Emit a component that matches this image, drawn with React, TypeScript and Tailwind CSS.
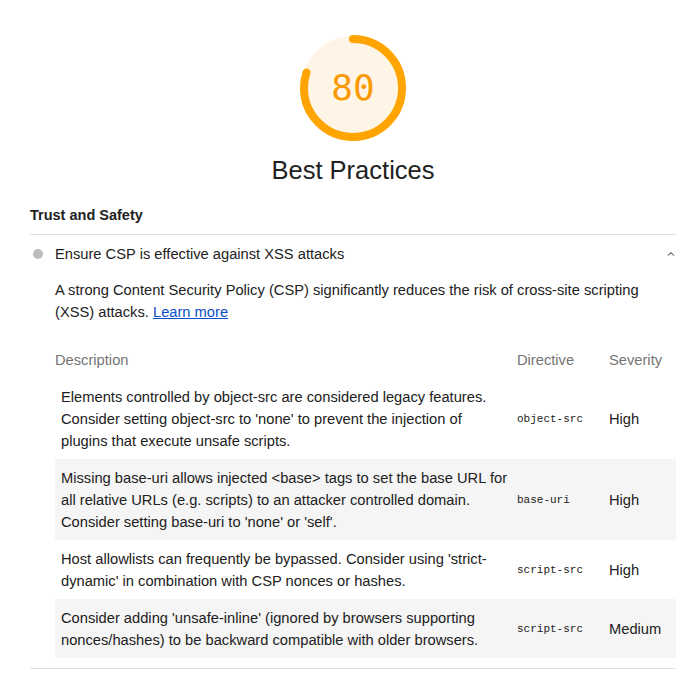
const ROWS = [
  {
    text: "Elements controlled by object-src are considered legacy features. Consider setting object-src to 'none' to prevent the injection of plugins that execute unsafe scripts.",
    directive: "object-src",
    severity: "High",
  },
  {
    text: "Missing base-uri allows injected <base> tags to set the base URL for all relative URLs (e.g. scripts) to an attacker controlled domain. Consider setting base-uri to 'none' or 'self'.",
    directive: "base-uri",
    severity: "High",
  },
  {
    text: "Host allowlists can frequently be bypassed. Consider using 'strict-dynamic' in combination with CSP nonces or hashes.",
    directive: "script-src",
    severity: "High",
  },
  {
    text: "Consider adding 'unsafe-inline' (ignored by browsers supporting nonces/hashes) to be backward compatible with older browsers.",
    directive: "script-src",
    severity: "Medium",
  },
];

function Gauge({ score }: { score: number }) {
  const r = 49;
  const c = 2 * Math.PI * r;
  return (
    <div className="relative h-[106px] w-[106px]">
      <svg viewBox="0 0 106 106" className="h-[106px] w-[106px] -rotate-90">
        <circle cx="53" cy="53" r="52" fill="#fff5e6" />
        <circle
          cx="53"
          cy="53"
          r={r}
          fill="none"
          stroke="#ffa400"
          strokeWidth="8"
          strokeLinecap="round"
          strokeDasharray={`${(c * score) / 100} ${c}`}
        />
      </svg>
      <div className="absolute inset-0 flex items-center justify-center font-['DejaVu_Sans_Mono',monospace] text-[36px] text-[#fa9a00]">
        {score}
      </div>
    </div>
  );
}

export default function App() {
  return (
    <main className="min-h-screen bg-white pl-[30px] pr-[24px] pt-[35px] font-['Liberation_Sans',Arial,sans-serif] text-[14.7px] text-[#212121]">
      {/* Category header: score gauge + title */}
      <div className="flex flex-col items-center">
        <Gauge score={80} />
        <h1 className="mt-[14px] text-[25.5px] leading-[30px]">Best Practices</h1>
      </div>

      <h2 className="mt-[19px] pb-[8px] text-[14.5px] font-bold leading-[22px]">
        Trust and Safety
      </h2>

      <section className="border-y border-[#e0e0e0]">
        <div className="flex items-center pt-[8px] leading-[22px]">
          <span className="ml-[3px] h-[10px] w-[10px] rounded-full bg-[#bdbdbd]" />
          <span className="ml-[12px] flex-1">
            Ensure CSP is effective against XSS attacks
          </span>
          <svg viewBox="0 0 10 6" className="mr-[1px] h-[6px] w-[8px]">
            <polyline
              points="1,5 5,1.5 9,5"
              fill="none"
              stroke="#757575"
              strokeWidth="1.4"
            />
          </svg>
        </div>

        <div className="pl-[25px] pb-[10px]">
          <p className="mt-[14px] pr-[12px] leading-[22px]">
            A strong Content Security Policy (CSP) significantly reduces the risk of cross-site scripting
            (XSS) attacks.{" "}
            <a href="#" className="text-[#0c50c7] underline">
              Learn more
            </a>
          </p>

          <div className="mt-[18px] grid grid-cols-[1fr_92px_67px] leading-[22px]">
            <div className="pt-[8px] pb-[7px] text-[#757575]">Description</div>
            <div className="pt-[8px] pb-[7px] text-[#757575]">Directive</div>
            <div className="pt-[8px] pb-[7px] text-[#757575]">Severity</div>

            {ROWS.map((row, i) => (
              <div
                key={i}
                className={`col-span-3 grid grid-cols-[1fr_92px_67px] items-center ${
                  i % 2 === 1 ? "bg-[#f5f5f5]" : ""
                }`}
              >
                <div className="pl-[6px] pr-[5px] pt-[8px] pb-[7px]">{row.text}</div>
                <div className="font-['Liberation_Mono',monospace] text-[11px]">
                  {row.directive}
                </div>
                <div>{row.severity}</div>
              </div>
            ))}
          </div>
        </div>
      </section>
    </main>
  );
}
